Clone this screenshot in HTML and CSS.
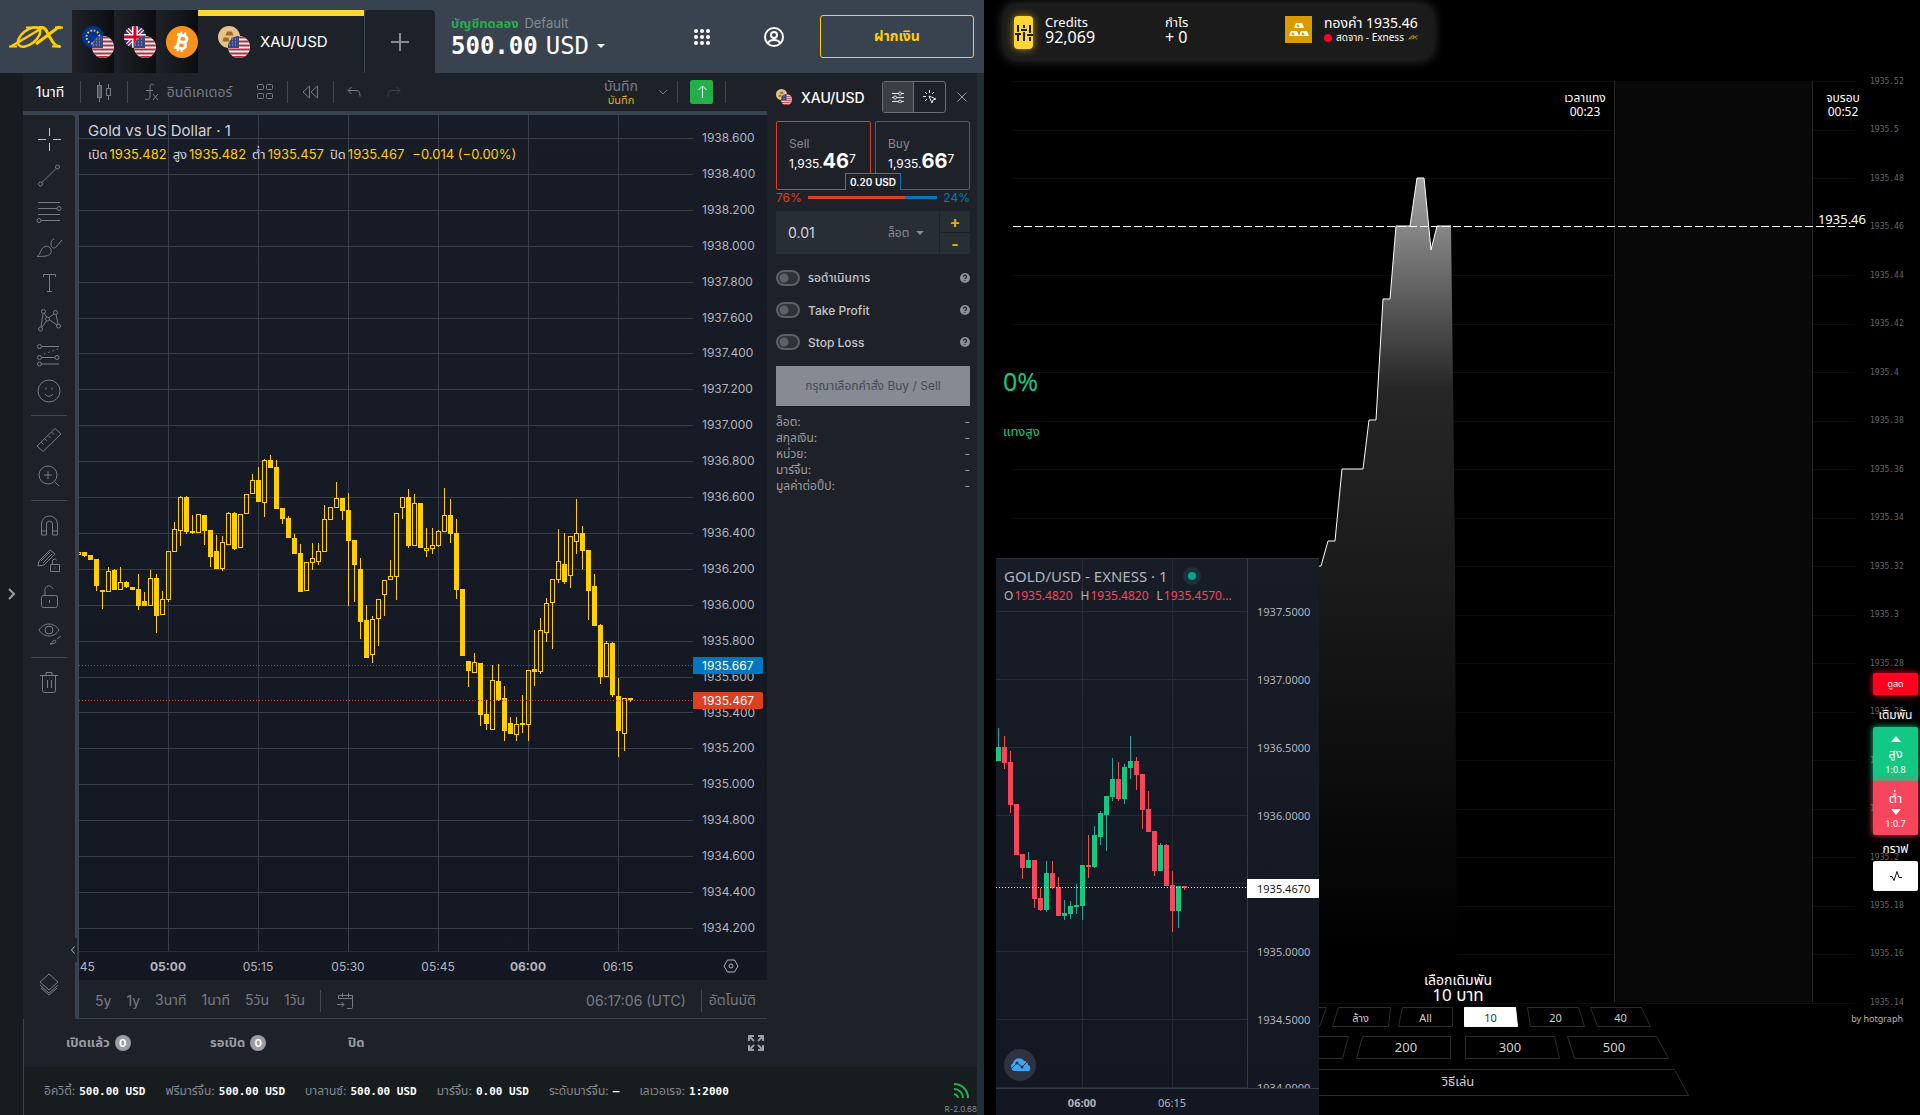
FILE: index.html
```html
<!DOCTYPE html>
<html lang="th">

<head>
    <meta charset="UTF-8">
    <meta name="viewport" content="width=device-width, initial-scale=1.0">
    <title>XAU/USD</title>
    <link rel="stylesheet" href="styles.css">
</head>

<body>
    <!-- Shared icons -->
    <svg class="sprite" width="0" height="0" aria-hidden="true">
        <clipPath id="round"><circle cx="11" cy="11" r="11" /></clipPath>
        <symbol id="us" viewBox="0 0 22 22">
            <g clip-path="url(#round)">
                <rect width="22" height="22" fill="#f4f4f4" />
                <path d="M0 1.5h22M0 5.5h22M0 9.5h22M0 13.5h22M0 17.5h22M0 21h22" stroke="#b0303c" stroke-width="2" />
                <rect width="11" height="12" fill="#39487e" />
                <path d="M1 3h9M1 6h9M1 9h9" stroke="#aab4d6" stroke-dasharray="1 2" />
            </g>
        </symbol>
        <symbol id="eu" viewBox="0 0 22 22">
            <circle cx="11" cy="11" r="11" fill="#003399" />
            <circle cx="11" cy="11" r="6.5" fill="none" stroke="#ffcc00" stroke-width="2" stroke-dasharray="1.6 1.8" />
        </symbol>
        <symbol id="gb" viewBox="0 0 22 22">
            <g clip-path="url(#round)">
                <rect width="22" height="22" fill="#1f3a8a" />
                <path d="M0 0l22 22M22 0L0 22" stroke="#fff" stroke-width="4" />
                <path d="M0 0l22 22M22 0L0 22" stroke="#d80027" stroke-width="1.5" />
                <path d="M11 0v22M0 11h22" stroke="#fff" stroke-width="6" />
                <path d="M11 0v22M0 11h22" stroke="#d80027" stroke-width="3" />
            </g>
        </symbol>
        <symbol id="gold" viewBox="0 0 22 22">
            <circle cx="11" cy="11" r="11" fill="#e3c58b" />
            <path d="M9 5.500h5l1.500 4h-8zM5.500 11.500h5l1 4h-7zM13 11.500h5l1 4h-6z" fill="#a2672b" />
        </symbol>
        <symbol id="btc" viewBox="0 0 32 32">
            <circle cx="16" cy="16" r="16" fill="#f7931a" />
            <g fill="none" stroke="#fff" stroke-width="3" transform="rotate(12 16 16)">
                <path d="M12.500 9v14M9.500 9.500H17a3 3 0 0 1 0 6.500h-4.500M17 16a3.200 3.200 0 0 1 0 6.500H9.500" />
                <path d="M13.500 6v3M17.500 6v3M13.500 23v3M17.500 23v3" stroke-width="2" />
            </g>
        </symbol>
        <symbol id="ex" viewBox="0 0 54 22">
            <g fill="none" stroke="#ffcf01" stroke-width="2.500">
                <path d="M2 20.500L34 1.500" />
                <ellipse cx="20" cy="11" rx="13" ry="7" transform="rotate(-38 20 11)" />
                <path d="M30 1.500h3c4 0 5 5 8 10s5 9 10 9M52 1.500h-3L27 18" stroke-width="3" />
                <path d="M0 20.500h8M17 1.500h17M43 20.500h9M46 1.500h8" stroke-width="2" />
            </g>
        </symbol>
        <symbol id="help" viewBox="0 0 10 10">
            <circle cx="5" cy="5" r="5" fill="#8c9096" />
            <path d="M3.500 3.800a1.500 1.500 0 1 1 2 1.300c-.4.2-.5.4-.5.9M5 7v1" fill="none" stroke="#1e2228" stroke-width="1.200" />
        </symbol>
    </svg>

    <div class="screen">
        <section class="terminal">
            <header class="topbar">
                <a class="logo" href="#" aria-label="Home"><svg width="54" height="22"><use href="#ex" /></svg></a>
                <nav class="tabs">
                    <a class="pair" href="#" aria-label="EUR/USD"><span class="coins"><svg width="22" height="22"><use href="#eu" /></svg><svg width="22" height="22"><use href="#us" /></svg></span></a>
                    <a class="pair" href="#" aria-label="GBP/USD"><span class="coins"><svg width="22" height="22"><use href="#gb" /></svg><svg width="22" height="22"><use href="#us" /></svg></span></a>
                    <a class="pair" href="#" aria-label="BTC"><svg width="32" height="32"><use href="#btc" /></svg></a>
                    <a class="pair active" href="#"><span class="coins"><svg width="22" height="22"><use href="#gold" /></svg><svg width="22" height="22"><use href="#us" /></svg></span>XAU/USD</a>
                    <button class="add-tab" aria-label="Add"><svg width="18" height="18"><path d="M9 0v18M0 9h18" stroke="#868a92" stroke-width="2" /></svg></button>
                </nav>
                <button class="account">
                    <span class="account-type"><b>บัญชีทดลอง</b> Default</span>
                    <span class="balance"><b>500.00</b><span>USD</span><i class="caret"></i></span>
                </button>
                <div class="topbar-right">
                    <button class="icon" aria-label="Apps">
                        <svg width="16" height="16" fill="#fff"><circle cx="2" cy="2" r="2" /><circle cx="8" cy="2" r="2" /><circle cx="14" cy="2" r="2" /><circle cx="2" cy="8" r="2" /><circle cx="8" cy="8" r="2" /><circle cx="14" cy="8" r="2" /><circle cx="2" cy="14" r="2" /><circle cx="8" cy="14" r="2" /><circle cx="14" cy="14" r="2" /></svg>
                    </button>
                    <button class="icon" aria-label="Profile">
                        <svg width="20" height="20" fill="none" stroke="#fff" stroke-width="2"><circle cx="10" cy="10" r="9" /><circle cx="10" cy="8" r="3" /><path d="M4 16c2-4 10-4 12 0" /></svg>
                    </button>
                    <button class="deposit">ฝากเงิน</button>
                </div>
            </header>

            <div class="workspace">
                <aside class="rail"><button aria-label="Open"><svg width="8" height="12" fill="none" stroke="#9a9da3" stroke-width="2"><path d="M1 1l5 5-5 5" /></svg></button></aside>

                <div class="desk">
                    <div class="desk-top">
                        <div class="chart-side">
                            <div class="toolbar">
                                <button class="interval">1นาที</button>
                                <i class="sep"></i>
                                <button class="style" aria-label="Candles"><svg width="16" height="20" fill="none" stroke="#787b86"><path d="M3.500 0v3M3.500 16v4M12.500 2v4M12.500 14v4" /><rect x="1.500" y="3.500" width="4" height="12" fill="#50535e" /><rect x="10.500" y="6.500" width="4" height="7" /></svg></button>
                                <i class="sep"></i>
                                <button class="indicators"><svg width="15" height="18" fill="none" stroke="#787b86"><path d="M10 2c-4-3-4 2-4 5v6c0 3-2 4-5 3M2 7.500h7M9 11l5 6M14 11l-5 6" /></svg>อินดิเคเตอร์</button>
                                <button class="layouts" aria-label="Layouts"><svg width="18" height="18" fill="none" stroke="#787b86"><rect x="1.500" y="1.500" width="6" height="5" rx="1" /><rect x="10.500" y="1.500" width="6" height="5" rx="1" /><rect x="1.500" y="10.500" width="6" height="5" rx="1" /><rect x="10.500" y="10.500" width="6" height="5" rx="1" /></svg></button>
                                <i class="sep"></i>
                                <button class="replay" aria-label="Replay"><svg width="17" height="14" fill="none" stroke="#787b86"><path d="M7.500 1v12L1 7zM15.500 1v12L9 7z" /></svg></button>
                                <i class="sep"></i>
                                <button class="undo" aria-label="Undo"><svg width="14" height="12" fill="none" stroke="#787b86"><path d="M4.500 1L1 4.500 4.500 8M1 4.500h8c3 0 4 2 4 6" /></svg></button>
                                <button class="redo" aria-label="Redo" disabled><svg width="14" height="12" fill="none" stroke="#3f434d"><path d="M9.500 1L13 4.500 9.500 8M13 4.500H5c-3 0-4 2-4 6" /></svg></button>
                                <button class="save">บันทึก<small>บันทึก</small></button>
                                <button class="save-more" aria-label="More"><svg width="10" height="6" fill="none" stroke="#787b86"><path d="M1 1l4 4 4-4" /></svg></button>
                                <i class="sep"></i>
                                <button class="publish" aria-label="Publish"><svg width="10" height="14" fill="none" stroke="#fff" stroke-width="1"><path d="M5.500 13V1M1.500 5l4-4 4 4" /></svg></button>
                                <i class="sep"></i>
                            </div>

                            <div class="chart-row">
                                <div class="tools">
                                    <button aria-label="Cross"><svg viewBox="0 0 28 28" class="on"><path d="M14.500 3v8M14.500 18v8M3 14.500h8M18 14.500h8" /></svg></button>
                                    <button aria-label="Trend line"><svg viewBox="0 0 28 28"><circle cx="5.500" cy="23" r="2" /><circle cx="22.500" cy="6" r="2" /><path d="M7 21.500L21 7.500" /></svg></button>
                                    <button aria-label="Fib"><svg viewBox="0 0 28 28"><path d="M3 5.500h22M3 11.500h19M3 17.500h22M6 23.500h19" /><circle cx="24" cy="11.500" r="2" /><circle cx="4" cy="23.500" r="2" /></svg></button>
                                    <button aria-label="Brush"><svg viewBox="0 0 28 28"><path d="M2 23.500c4-2 3-8 8-10 4-1 7 2 6 6-1 4-8 4-14 4zM16 11c0 4 3 5 5 3l6-7M16 11c0-3 1-4 3-5" /></svg></button>
                                    <button aria-label="Text"><svg viewBox="0 0 28 28"><path d="M8.500 8V5.500h12V8M14.500 5.500v17M12 22.500h5" /></svg></button>
                                    <button aria-label="Pattern"><svg viewBox="0 0 28 28"><circle cx="8.500" cy="6.500" r="2" /><circle cx="20.500" cy="7.500" r="2" /><circle cx="12.500" cy="14" r="2" /><circle cx="5.500" cy="24" r="2" /><circle cx="23.500" cy="21" r="2" /><path d="M8 8.500L6 22M9.500 8.500l2 4M7 22l4.500-6M14 12.500l5-3.500M14.500 15l7.500 5M21 9.500l2 9.500" /></svg></button>
                                    <button aria-label="Prediction"><svg viewBox="0 0 28 28"><circle cx="4.500" cy="5.500" r="2" /><circle cx="4.500" cy="16.500" r="2" /><circle cx="22" cy="16.500" r="2" /><circle cx="4.500" cy="23" r="2" /><path d="M7 5.500h17M7 16.500h13M7 23h17" /><path d="M9 13l14-5" stroke-dasharray="1.500 3" /></svg></button>
                                    <button aria-label="Emoji"><svg viewBox="0 0 28 28"><circle cx="14" cy="14" r="11" /><path d="M10 17c2 3 6 3 8 0M11 10.500v2M17 10.500v2" /></svg></button>
                                    <i></i>
                                    <button aria-label="Measure"><svg viewBox="0 0 28 28"><path d="M2 20L20 2.500l6 5.500L8 25.500zM6 16l2.500 2.500M9.500 12.500L12 15M13 9.500l2.500 2.500M16.500 6l2.500 2.500" /></svg></button>
                                    <button aria-label="Zoom"><svg viewBox="0 0 28 28"><circle cx="13" cy="13" r="9" /><path d="M13 9v8M9 13h8M20 20l4 4" /></svg></button>
                                    <i></i>
                                    <button aria-label="Magnet"><svg viewBox="0 0 28 28"><path d="M6.500 24V13a8 8 0 0 1 16 0v11h-5V13a3 3 0 0 0-6 0v11zM6.500 20h5M17.500 20h5" /></svg></button>
                                    <button aria-label="Drawing mode"><svg viewBox="0 0 28 28"><path d="M3 19l1-5L15 3l5 4L9 18zM6 14l9-9M8 16l9-9" /><path d="M15.500 17.500h9v7h-9zM17.500 17v-2.500a2 2 0 0 1 4-1M20 20.500v1" /></svg></button>
                                    <button aria-label="Lock"><svg viewBox="0 0 28 28"><rect x="6.500" y="12.500" width="16" height="12" rx="2" /><path d="M10 12V8a4 4 0 0 1 8-2M14.500 17v3" /></svg></button>
                                    <button aria-label="Hide"><svg viewBox="0 0 28 28"><path d="M4 11c5-8 15-8 20 0-5 8-15 8-20 0zM15 25c3 0 2-4 5-4 2 2 0 4-5 4zM22 20l4-3" /><circle cx="14" cy="11" r="4" /></svg></button>
                                    <i></i>
                                    <button aria-label="Remove"><svg viewBox="0 0 28 28"><path d="M5 7.500h18M11 7V4.500h6V7M7.500 7.500v15a2 2 0 0 0 2 2h9a2 2 0 0 0 2-2v-15M12.500 12v8M16.500 12v8" /></svg></button>
                                    <button class="layers" aria-label="Layers"><svg viewBox="0 0 28 28"><path d="M14 3l9 8-9 8-9-8zM5 14l9 8 9-8M6 17l8 7 8-7" /></svg></button>
                                    <span class="collapse"><svg width="4" height="8" fill="none" stroke="#b2b5be"><path d="M3.500 0.500l-3 3.500 3 3.500" /></svg></span>
                                </div>

                                <div class="chart-main">
                                    <div class="plot-row">
                                        <svg class="plot" id="mainPlot"></svg>
                                        <div class="prices" id="mainPrices"></div>
                                        <div class="legend">
                                            <h1>Gold vs US Dollar · 1</h1>
                                            <p><span>เปิด<b>1935.482</b></span><span>สูง<b>1935.482</b></span><span>ต่ำ<b>1935.457</b></span><span>ปิด<b>1935.467</b></span><b>−0.014 (−0.00%)</b></p>
                                        </div>
                                        <span class="price-tag ask">1935.667</span>
                                        <span class="price-tag bid">1935.467</span>
                                    </div>
                                    <div class="time-row">
                                        <div class="times"><span>04:45</span><b>05:00</b><span>05:15</span><span>05:30</span><span>05:45</span><b>06:00</b><span>06:15</span></div>
                                        <button aria-label="Settings"><svg width="16" height="16" fill="none" stroke="#b2b5be"><path d="M4.500 2h7L15 8l-3.500 6h-7L1 8z" /><circle cx="8" cy="8" r="2" /></svg></button>
                                    </div>
                                    <div class="range">
                                        <button>5y</button><button>1y</button><button>3นาที</button><button>1นาที</button><button>5วัน</button><button>1วัน</button>
                                        <i class="sep"></i>
                                        <button aria-label="Go to"><svg width="18" height="18" fill="none" stroke="#787b86"><path d="M2.500 7V3.500h14v12a1 1 0 0 1-1 1H11M2.500 6.500h14M6.500 1v4M12.500 1v4M1 12.500h7M5.500 10L8 12.500 5.500 15" /></svg></button>
                                        <span class="clock">06:17:06 (UTC)</span>
                                        <i class="sep"></i>
                                        <button>อัตโนมัติ</button>
                                    </div>
                                </div>
                            </div>

                            <div class="orders">
                                <a href="#">เปิดแล้ว<span>0</span></a>
                                <a href="#">รอเปิด<span>0</span></a>
                                <a href="#">ปิด</a>
                                <button aria-label="Expand"><svg width="16" height="16" fill="none" stroke="#9a9da3" stroke-width="2"><path d="M1 6V1h5M10 1h5v5M15 10v5h-5M6 15H1v-5M1 1l5 5M15 1l-5 5M15 15l-5-5M1 15l5-5" /></svg></button>
                            </div>
                        </div>

                        <aside class="ticket">
                            <div class="ticket-head">
                                <span class="coins small"><svg width="11" height="11"><use href="#gold" /></svg><svg width="11" height="11"><use href="#us" /></svg></span>
                                <h2>XAU/USD</h2>
                                <div class="mode">
                                    <button class="on" aria-label="Form"><svg width="12" height="12" fill="none" stroke="#e6e7e9"><path d="M0 2.500h12M0 6.500h12M0 10.500h12" /><circle cx="8" cy="2.500" r="1.500" fill="#3a3f44" /><circle cx="3" cy="6.500" r="1.500" fill="#3a3f44" /><circle cx="8" cy="10.500" r="1.500" fill="#3a3f44" /></svg></button>
                                    <button aria-label="One click"><svg width="14" height="14" fill="none" stroke="#e6e7e9"><path d="M6.500 0v3M0 6.500h3M2 2l2 2M11 2L9 4M2 11l2-2M6 6l7 3-3 1-1 3z" /></svg></button>
                                </div>
                                <button class="close" aria-label="Close"><svg width="10" height="10" stroke="#9a9da3"><path d="M0.500 0.500l9 9M9.500 0.500l-9 9" /></svg></button>
                            </div>
                            <div class="quotes">
                                <button class="sell">Sell<span>1,935.<b>46</b><sup>7</sup></span></button>
                                <button class="buy">Buy<span>1,935.<b>66</b><sup>7</sup></span></button>
                                <span class="spread">0.20 USD</span>
                            </div>
                            <div class="sentiment"><span>76%</span><i></i><span>24%</span></div>
                            <div class="volume">
                                <input type="text" value="0.01" aria-label="Volume">
                                <select aria-label="Unit"><option>ล็อต</option></select>
                                <button class="plus" aria-label="Increase">+</button>
                                <button class="minus" aria-label="Decrease">-</button>
                            </div>
                            <label class="switch"><input type="checkbox">รอดำเนินการ<svg width="10" height="10"><use href="#help" /></svg></label>
                            <label class="switch"><input type="checkbox">Take Profit<svg width="10" height="10"><use href="#help" /></svg></label>
                            <label class="switch"><input type="checkbox">Stop Loss<svg width="10" height="10"><use href="#help" /></svg></label>
                            <button class="submit" disabled>กรุณาเลือกคำสั่ง Buy / Sell</button>
                            <dl>
                                <div><dt>ล็อต:</dt><dd>-</dd></div>
                                <div><dt>สกุลเงิน:</dt><dd>-</dd></div>
                                <div><dt>หน่วย:</dt><dd>-</dd></div>
                                <div><dt>มาร์จิ้น:</dt><dd>-</dd></div>
                                <div><dt>มูลค่าต่อปิ๊ป:</dt><dd>-</dd></div>
                            </dl>
                        </aside>
                    </div>

                    <footer class="status">
                        <span>อิควิตี้:<b>500.00 USD</b></span>
                        <span>ฟรีมาร์จิ้น:<b>500.00 USD</b></span>
                        <span>บาลานซ์:<b>500.00 USD</b></span>
                        <span>มาร์จิ้น:<b>0.00 USD</b></span>
                        <span>ระดับมาร์จิ้น:<b>–</b></span>
                        <span>เลเวอเรจ:<b>1:2000</b></span>
                        <div class="signal">
                            <svg width="16" height="16" fill="none" stroke="#23b04b" stroke-width="2"><path d="M1 1c8 0 14 6 14 14M1 6c5 0 9 4 9 9M1 11c2 0 4 2 4 4" /></svg>
                            <small>R-2.0.68</small>
                        </div>
                    </footer>
                </div>
                <div class="edge"></div>
            </div>
        </section>

        <section class="game">
            <header class="credits">
                <button class="tune" aria-label="Settings"><svg width="18" height="16" fill="none" stroke="#1b1b1b" stroke-width="2"><path d="M3 0v7M3 10v6M9 0v3M9 7v9M15 0v8M15 12v4M0 9h6M6 5h6M12 10h6" /></svg></button>
                <p class="amount">Credits<b>92,069</b></p>
                <p class="profit">กำไร<b>+ 0</b></p>
                <span class="bars"><svg width="20" height="14" fill="#fff"><path d="M7 0h6l2 5H5zM2 8h6l2 5H0zM12 8h6l2 5H10z" /><path d="M8 2l2 2M3 10l2 2M13 10l2 2" stroke="#d89b00" stroke-width="2" /></svg></span>
                <p class="asset">ทองคำ 1935.46<small><i></i>สดจาก - Exness <svg width="10" height="5" viewBox="0 0 54 22"><use href="#ex" /></svg></small></p>
            </header>

            <div class="round">
                <svg class="round-plot" id="roundPlot">
                    <defs>
                        <linearGradient id="fade" gradientUnits="userSpaceOnUse" x1="0" y1="102" x2="0" y2="880">
                            <stop offset="0" stop-color="#a4a4a4" />
                            <stop offset="0.06" stop-color="#888" />
                            <stop offset="0.27" stop-color="#262626" />
                            <stop offset="0.5" stop-color="#1b1b1b" />
                            <stop offset="1" stop-color="#000" />
                        </linearGradient>
                    </defs>
                    <g id="roundGrid"></g>
                    <rect x="630" y="5" width="199" height="921" fill="#080808" />
                    <path d="M630.500 5v921M828.500 5v921" stroke="#262626" />
                    <path d="M300 490h37l7-25h7l7-72h21l6-49h7l7-121h7l6-73h14l7-48h7l7 72 6-24h14l2 154 2 186 2 435H300z" fill="url(#fade)" />
                    <path d="M300 490h37l7-25h7l7-72h21l6-49h7l7-121h7l6-73h14l7-48h7l7 72 6-24h14" fill="none" stroke="#fff" />
                    <path d="M29 150.500h842" stroke="#fff" stroke-dasharray="8 3" />
                </svg>
                <div class="round-prices" id="roundPrices"></div>
                <p class="mark bet-time">เวลาแทง<b>00:23</b></p>
                <p class="mark end-time">จบรอบ<b>00:52</b></p>
                <span class="mark last">1935.46</span>
                <p class="share">0%<small>แทงสูง</small></p>
            </div>
            <p class="by">by hotgraph</p>

            <div class="stake">
                <p>เลือกเดิมพัน<b>10 บาท</b></p>
                <div class="pad">
                    <!-- Slanted key outlines -->
                    <svg width="462" height="90" fill="none" stroke="#2c2c2c" stroke-linejoin="round">
                        <path d="M48.500 0.500h51l-7 19h-53zM111.500 0.500h52l-2 19h-56zM175.500 0.500h50v19h-54zM300.500 0.500h51l6 19h-54zM363.500 0.500h51l9 19h-53z" />
                        <path d="M237.500 0.500h51l2 19h-53z" fill="#fff" stroke="#fff" />
                        <path d="M27.500 29.500h94l-6 22h-98zM135.500 29.500h88v22h-94zM238.500 29.500h89l5 22h-94zM340.500 29.500h89l12 22h-94zM14.500 62.500h433l14 26H0.500z" />
                    </svg>
                    <div class="keys"><span></span><button>ล้าง</button><button>All</button><button class="on">10</button><button>20</button><button>40</button></div>
                    <div class="keys"><span></span><button>200</button><button>300</button><button>500</button></div>
                    <div class="keys"><button>วิธีเล่น</button></div>
                </div>
            </div>

            <div class="side">
                <button class="live">ดูสด</button>
                <span>เดิมพัน</span>
                <button class="up"><svg width="10" height="6" fill="#fff"><path d="M0 6l5-6 5 6z" /></svg>สูง<small>1:0.8</small></button>
                <button class="down">ต่ำ<svg width="10" height="6" fill="#fff"><path d="M0 0l5 6 5-6z" /></svg><small>1:0.7</small></button>
                <span>กราฟ</span>
                <button class="graph" aria-label="Graph"><svg width="12" height="12" fill="none" stroke="#111" stroke-width="1"><path d="M0 6.500h2l2 4 3-9 2 6h3" /></svg></button>
            </div>

            <div class="widget">
                <div class="widget-plot">
                    <svg class="plot" id="widgetPlot"></svg>
                    <div class="widget-prices" id="widgetPrices"></div>
                    <div class="widget-legend">
                        <h3>GOLD/USD - EXNESS · 1<i></i></h3>
                        <p>O<b>1935.4820</b>H<b>1935.4820</b>L<b>1935.4570...</b></p>
                    </div>
                    <span class="widget-tag">1935.4670</span>
                    <a class="cloud" href="#" aria-label="TradingView"><svg width="22" height="14"><path d="M5 13a4.500 4.500 0 0 1-1-8C6-1 13-1 15 3c3 0 4 2 4 4 3 1 3 6 0 6z" fill="#3ba4f4" /><path d="M2 11l6-6 5 4 5-5" fill="none" stroke="#2f3241" stroke-width="1" /><circle cx="8" cy="5" r="1.500" fill="#2f3241" /><circle cx="13" cy="9" r="1.500" fill="#2f3241" /></svg></a>
                </div>
                <div class="widget-times"><b>06:00</b><span>06:15</span></div>
            </div>
        </section>
    </div>

    <script src="script.js"></script>
</body>

</html>
```
FILE: styles.css
```css
* {
    box-sizing: border-box;
}

body {
    margin: 0;
    background: #000;
    color: #d1d4dc;
    font-family: Inter, "Noto Sans", "Noto Sans Thai", sans-serif;
    font-size: 13px;
}

button,
input,
select {
    margin: 0;
    padding: 0;
    border: 0;
    background: none;
    color: inherit;
    font: inherit;
}

button {
    cursor: pointer;
}

a {
    color: inherit;
    text-decoration: none;
}

p,
h1,
h2,
h3,
dl,
dd {
    margin: 0;
}

svg {
    display: block;
    flex: none;
}

.sprite {
    position: absolute;
}

.screen {
    display: grid;
    grid-template-columns: minmax(0, 984fr) minmax(0, 936fr);
    height: 100vh;
}

/* Terminal */
.terminal {
    display: flex;
    flex-direction: column;
    min-height: 0;
    background: #1e2228;
}

.topbar {
    display: flex;
    height: 73px;
    padding-right: 10px;
    background: #38434f;
}

.logo {
    width: 72px;
    padding: 26px 0 0 9px;
}

.tabs {
    display: flex;
    padding-top: 10px;
}

.pair {
    display: flex;
    align-items: center;
    width: 42px;
    padding: 0 0 0 10px;
    overflow: hidden;
    background: linear-gradient(90deg, #1e2228, #0b0d10);
    color: #fff;
    font-size: 15px;
}

.pair.active {
    width: 166px;
    gap: 10px;
    padding: 0 0 6px 20px;
    background: #1e2228;
    border-top: 6px solid #fdd835;
}

.coins {
    position: relative;
    display: block;
    flex: none;
    width: 32px;
    height: 32px;
}

.coins svg + svg {
    position: absolute;
    right: 0;
    bottom: 0;
}

.coins.small {
    width: 16px;
    height: 16px;
}

.add-tab {
    display: grid;
    place-items: center;
    width: 70px;
    margin-left: 1px;
    border-radius: 4px 4px 0 0;
    background: #1e2228;
}

.account {
    display: flex;
    flex-direction: column;
    padding: 14px 0 0 16px;
    color: #868a92;
    text-align: left;
}

.account-type {
    line-height: 18px;
    white-space: nowrap;
}

.account-type b {
    margin-right: 2px;
    color: #23b04b;
}

.balance {
    display: flex;
    align-items: center;
    gap: 8px;
    color: #fff;
    font-family: "DejaVu Sans Mono", monospace;
    font-size: 24px;
    line-height: 28px;
}

.caret {
    border: 4px solid transparent;
    border-top-color: #fff;
    border-bottom: 0;
}

.topbar-right {
    display: flex;
    align-items: flex-start;
    gap: 54px;
    margin-left: auto;
    padding-top: 15px;
}

.icon {
    display: grid;
    place-items: center;
    height: 44px;
}

.deposit {
    width: 154px;
    height: 43px;
    margin-left: -18px;
    border: 1px solid #ffcf01;
    border-radius: 3px;
    color: #ffcf01;
    font-size: 14px;
    font-weight: bold;
}

.workspace {
    display: flex;
    flex: 1;
    min-height: 0;
}

.rail {
    display: grid;
    place-items: center;
    width: 23px;
    background: #171c1f;
}

.edge {
    width: 7px;
    background: #222e36;
}

.desk {
    display: flex;
    flex: 1;
    flex-direction: column;
    min-width: 0;
}

.desk-top {
    display: flex;
    flex: 1;
    min-height: 0;
}

.chart-side {
    display: flex;
    flex: 1;
    flex-direction: column;
    min-width: 0;
}

.toolbar {
    display: flex;
    align-items: center;
    height: 42px;
    padding-right: 41px;
    border-bottom: 4px solid #38434f;
    color: #787b86;
    font-size: 14px;
}

.sep {
    width: 1px;
    height: 22px;
    background: #434751;
}

.toolbar button {
    display: flex;
    align-items: center;
    justify-content: center;
}

.toolbar .interval {
    width: 57px;
    padding-right: 3px;
    color: #fff;
}

.toolbar .style {
    width: 46px;
}

.toolbar .indicators {
    width: 120px;
    gap: 8px;
    white-space: nowrap;
}

.toolbar .layouts {
    width: 39px;
    justify-content: flex-start;
    padding-left: 8px;
}

.toolbar .replay {
    width: 45px;
}

.toolbar .undo,
.toolbar .redo {
    width: 40px;
}

.toolbar .save {
    flex-direction: column;
    margin-left: auto;
    line-height: 17px;
}

.save small {
    color: #d9b310;
    font-size: 11px;
    line-height: 13px;
}

.toolbar .save-more {
    width: 39px;
    padding-left: 10px;
}

.toolbar .publish {
    width: 23px;
    height: 24px;
    margin: 0 12px;
    border-radius: 2px;
    background: #23b04b;
}

.chart-row {
    display: flex;
    flex: 1;
    min-height: 0;
    background: #38434f;
}

.tools {
    position: relative;
    display: flex;
    flex-direction: column;
    align-items: center;
    width: 52px;
    margin-right: 4px;
    padding: 6px 0 16px;
    border-radius: 0 4px 0 0;
    background: #1e2228;
}

.tools button {
    display: grid;
    place-items: center;
    width: 36px;
    height: 36px;
}

.tools button svg {
    width: 28px;
    height: 28px;
    fill: none;
    stroke: #787b86;
}

.tools button svg.on {
    stroke: #ffcf01;
}

.tools > i {
    width: 36px;
    height: 1px;
    margin: 6px 0;
    background: #434751;
}

.tools .layers {
    margin-top: auto;
}

.collapse {
    position: absolute;
    right: -2px;
    bottom: 56px;
    padding: 9px 2px;
    border-radius: 3px;
    background: #1e2228;
}

.chart-main {
    display: flex;
    flex: 1;
    flex-direction: column;
    min-width: 0;
    background: linear-gradient(#181c27, #131722);
}

.plot-row {
    position: relative;
    display: flex;
    flex: 1;
    min-height: 0;
    border-bottom: 1px solid #2a2e39;
}

.plot {
    flex: 1;
    width: 0;
    height: 100%;
}

.prices {
    display: grid;
    grid-auto-rows: 1fr;
    align-items: center;
    width: 74px;
    padding: 5px 0 5px 9px;
    color: #b2b5be;
    font-size: 12px;
    line-height: 14px;
}

.legend {
    position: absolute;
    top: 6px;
    left: 9px;
}

.legend h1 {
    color: #d1d4dc;
    font-size: 15px;
    font-weight: normal;
    line-height: 20px;
}

.legend p {
    display: flex;
    gap: 6px;
    margin-top: 4px;
    line-height: 18px;
}

.legend b {
    padding-left: 2px;
    color: #ffcf01;
    font-weight: normal;
}

.price-tag {
    position: absolute;
    right: 4px;
    width: 70px;
    padding-left: 9px;
    border-radius: 0 2px 2px 0;
    color: #fff;
    font-size: 12px;
    line-height: 17px;
}

.ask {
    top: 542px;
    background: #0277bd;
}

.bid {
    top: 577px;
    background: #db4022;
}

.time-row {
    display: flex;
    align-items: center;
    justify-content: space-between;
    height: 28px;
    padding-right: 28px;
    color: #b2b5be;
    font-size: 12px;
}

.times {
    display: flex;
    overflow: hidden;
}

.times > * {
    width: 90px;
    text-align: center;
}

.times > :first-child {
    margin-left: -46px;
}

.range {
    display: flex;
    align-items: center;
    gap: 15px;
    height: 39px;
    padding: 3px 11px 0 16px;
    border-bottom: 1px solid #38434f;
    background: #1e2228;
    color: #787b86;
    font-size: 14px;
    white-space: nowrap;
}

.clock {
    margin-left: auto;
}

.range .sep:last-of-type {
    margin-right: -8px;
}

.orders {
    display: flex;
    align-items: center;
    height: 48px;
    padding: 0 3px 0 42px;
    border-left: 1px solid #38434f;
    color: #9a9da3;
    font-weight: bold;
}

.orders a {
    display: flex;
    align-items: center;
    gap: 5px;
    width: 144px;
}

.orders a + a {
    width: 138px;
}

.orders a span {
    width: 16px;
    border-radius: 8px;
    background: #9a9da3;
    color: #fff;
    font-size: 11px;
    line-height: 16px;
    text-align: center;
}

.orders button {
    margin-left: auto;
}

/* Order ticket */
.ticket {
    display: flex;
    flex-direction: column;
    width: 210px;
    padding: 8px 7px 0 9px;
}

.ticket-head {
    display: flex;
    align-items: center;
    height: 32px;
}

.ticket h2 {
    margin-left: 9px;
    color: #fff;
    font-size: 14px;
    font-weight: 500;
}

.mode {
    display: flex;
    height: 32px;
    margin-left: auto;
    border: 1px solid #6b6f74;
    border-radius: 3px;
}

.mode button {
    display: grid;
    place-items: center;
    width: 31px;
}

.mode .on {
    border-right: 1px solid #6b6f74;
    background: #3a3f44;
}

.close {
    margin: 0 3px 0 11px;
}

.quotes {
    position: relative;
    display: grid;
    grid-template-columns: 1fr 1fr;
    gap: 4px;
    height: 69px;
    margin-top: 8px;
}

.quotes button {
    padding-left: 12px;
    border: 1px solid #db4022;
    border-radius: 2px;
    color: #868a92;
    font-size: 12px;
    line-height: 14px;
    text-align: left;
}

.quotes .buy {
    border-color: #0277bd;
}

.quotes button span {
    display: block;
    color: #fff;
    line-height: 20px;
    white-space: nowrap;
}

.quotes button b {
    font-size: 20px;
}

.quotes sup {
    font-size: 12px;
    line-height: 0;
}

.spread {
    position: absolute;
    bottom: 0;
    left: 50%;
    width: 56px;
    margin-left: -28px;
    border: 1px solid #db4022;
    border-right-color: #0277bd;
    border-bottom: 0;
    background: #1e2228;
    color: #fff;
    font-size: 10px;
    font-weight: 600;
    line-height: 16px;
    text-align: center;
}

.sentiment {
    display: flex;
    align-items: center;
    gap: 6px;
    color: #db4022;
    font-size: 12px;
    line-height: 15px;
}

.sentiment i {
    flex: 1;
    height: 3px;
    background: linear-gradient(90deg, #db4022 75%, #0277bd 75%);
}

.sentiment span:last-child {
    color: #0277bd;
}

.volume {
    position: relative;
    display: grid;
    grid-template-columns: 1fr 58px 30px;
    grid-template-rows: 21px 21px;
    row-gap: 1px;
    margin-top: 6px;
}

.volume input,
.volume select {
    grid-row: span 2;
    min-width: 0;
    background: #272f35;
}

.volume input {
    padding-left: 12px;
    color: #d1d4dc;
    font-size: 14px;
}

.volume select {
    margin-right: 1px;
    padding-left: 6px;
    appearance: none;
    color: #868a92;
    font-size: 12px;
}

.volume::after {
    content: "";
    position: absolute;
    top: 20px;
    right: 46px;
    border: 4px solid transparent;
    border-top-color: #868a92;
    border-bottom: 0;
}

.volume button {
    background: #272f35;
    color: #d9b310;
    font-size: 16px;
    font-weight: bold;
    line-height: 20px;
}

.volume .minus {
    grid-column: 3;
}

.switch {
    display: flex;
    align-items: center;
    gap: 8px;
    height: 32px;
    color: #c4c6ca;
    font-size: 12px;
    font-weight: 500;
}

.volume + .switch {
    margin-top: 8px;
}

.switch input {
    width: 24px;
    height: 16px;
    border: 2px solid #5d6166;
    border-radius: 8px;
    background: radial-gradient(circle at 6px 6px, #5d6166 4px, #2f3337 5px);
    appearance: none;
}

.switch svg {
    margin-left: auto;
}

.submit {
    height: 40px;
    margin-top: 8px;
    background: #868a92;
    color: #434b58;
    font-size: 12px;
}

.ticket dl {
    margin-top: 8px;
    color: #9a9da3;
    font-size: 12px;
}

.ticket dl div {
    display: flex;
    justify-content: space-between;
    height: 16px;
    line-height: 16px;
}

/* Account status */
.status {
    display: flex;
    align-items: center;
    gap: 20px;
    height: 48px;
    padding-left: 20px;
    border-left: 1px solid #38434f;
    background: #171c1f;
    color: #868a92;
    font-size: 12px;
    white-space: nowrap;
}

.status b {
    margin-left: 4px;
    color: #fff;
    font-family: "DejaVu Sans Mono", monospace;
    font-size: 11px;
}

.signal {
    display: flex;
    flex-direction: column;
    align-items: center;
    gap: 5px;
    margin-left: auto;
    padding-top: 14px;
}

.signal small {
    font-size: 8px;
    line-height: 10px;
}

/* Game */
.game {
    position: relative;
    display: flex;
    flex-direction: column;
    min-width: 0;
    color: #fff;
    font-family: "Noto Sans", "Noto Sans Thai", sans-serif;
}

.credits {
    display: flex;
    width: 431px;
    height: 56px;
    margin: 4px 0 16px 19px;
    padding: 12px 11px 0;
    border-radius: 14px;
    background: #1b1b1b;
    box-shadow: 0 0 8px 2px #262626;
}

.credits b {
    display: block;
    font-size: 16px;
    font-weight: normal;
    line-height: 16px;
}

.credits p {
    line-height: 13px;
}

.tune {
    display: grid;
    place-items: center;
    width: 19px;
    height: 33px;
    border-radius: 4px;
    background: #fdd835;
    box-shadow: 0 0 8px #b39218;
}

.amount {
    width: 120px;
    margin-left: 12px;
}

.profit {
    width: 120px;
}

.bars {
    display: grid;
    place-items: center;
    width: 27px;
    height: 27px;
    background: #d89b00;
}

.credits .asset {
    margin-left: 12px;
    font-size: 14px;
    white-space: nowrap;
}

.asset small {
    display: flex;
    align-items: center;
    gap: 4px;
    margin-top: 2px;
    font-size: 10px;
}

.asset i {
    width: 8px;
    height: 8px;
    border-radius: 50%;
    background: #ff0020;
}

.round {
    position: relative;
    display: flex;
    flex: 1;
    max-height: 933px;
}

.round-plot {
    flex: 1;
    width: 0;
    height: 100%;
}

.round-prices {
    display: flex;
    flex-direction: column;
    justify-content: space-between;
    width: 50px;
    color: #666;
    font-family: "DejaVu Sans Mono", monospace;
    font-size: 8px;
    line-height: 12px;
}

.mark {
    position: absolute;
    font-size: 12px;
    line-height: 14px;
    text-align: center;
}

.mark b {
    display: block;
    font-weight: normal;
}

.bet-time {
    top: 15px;
    right: 311px;
    width: 48px;
}

.end-time {
    top: 15px;
    right: 53px;
    width: 48px;
}

.last {
    top: 136px;
    right: 54px;
    font-size: 13px;
}

.share {
    position: absolute;
    top: 288px;
    left: 19px;
    color: #13c784;
    font-size: 25px;
    line-height: 34px;
}

.share small {
    display: block;
    margin-top: 24px;
    font-size: 13px;
    line-height: 18px;
}

.by {
    padding-right: 17px;
    color: #b5b5b5;
    font-size: 9px;
    line-height: 20px;
    text-align: right;
}

.stake {
    position: absolute;
    bottom: 18px;
    left: 243px;
    width: 462px;
    font-size: 14px;
    line-height: 15px;
    text-align: center;
}

.stake p {
    margin-bottom: 4px;
}

.stake b {
    display: block;
    font-size: 17px;
    font-weight: normal;
    line-height: 16px;
}

.pad {
    position: relative;
    display: grid;
    grid-template-rows: 20px 23px 27px;
    gap: 9px;
    height: 90px;
    color: #d0d0d0;
}

.pad > svg {
    position: absolute;
    top: 0;
    left: 0;
}

.keys {
    position: relative;
    display: flex;
    justify-content: center;
    gap: 12px;
}

.keys > * {
    width: 53px;
    font-size: 11px;
}

.keys:nth-child(3) > * {
    width: 92px;
    font-size: 13px;
}

.keys:nth-child(4) > * {
    width: 430px;
    font-size: 13px;
}

.keys .on {
    color: #333;
}

.side {
    position: absolute;
    top: 673px;
    right: 2px;
    display: flex;
    flex-direction: column;
    width: 45px;
}

.side span {
    padding-top: 8px;
    font-size: 12px;
    line-height: 24px;
    text-align: center;
}

.side button {
    display: flex;
    flex-direction: column;
    align-items: center;
    justify-content: center;
    gap: 3px;
    height: 54px;
    font-size: 13px;
    line-height: 16px;
}

.side small {
    font-size: 9px;
    line-height: 12px;
}

.side .live {
    height: 22px;
    border-radius: 2px;
    background: #ff0020;
    box-shadow: 0 0 6px #ff0020;
    font-size: 9px;
}

.side .up {
    padding-top: 4px;
    border-radius: 2px 2px 0 0;
    background: #13c784;
    box-shadow: 0 0 6px #13c784;
}

.side .down {
    padding-top: 4px;
    border-radius: 0 0 2px 2px;
    background: #f6465d;
    box-shadow: 0 0 6px #f6465d;
}

.side span:nth-of-type(2) {
    padding-top: 2px;
}

.side .graph {
    height: 30px;
    border-radius: 2px;
    background: #fff;
}

/* Floating chart */
.widget {
    position: absolute;
    bottom: 0;
    left: 12px;
    display: flex;
    flex-direction: column;
    width: 323px;
    height: 557px;
    border-top: 1px solid #2f323c;
    background: linear-gradient(#181c27, #131722);
    color: #b2b5be;
    font-family: "Noto Sans", sans-serif;
    font-size: 11px;
}

.widget-plot {
    position: relative;
    display: flex;
    height: 531px;
    overflow: hidden;
    border-bottom: 1px solid #363a45;
}

.widget-prices {
    display: grid;
    grid-auto-rows: 68px;
    align-items: center;
    width: 72px;
    padding: 18px 0 0 9px;
    border-left: 1px solid #363a45;
}

.widget-legend {
    position: absolute;
    top: 7px;
    left: 8px;
}

.widget-legend h3 {
    display: flex;
    align-items: center;
    gap: 15px;
    font-size: 15px;
    font-weight: normal;
    line-height: 20px;
}

.widget-legend i {
    width: 18px;
    height: 18px;
    border: 5px solid #1a3238;
    border-radius: 50%;
    background: #0f9f8f;
}

.widget-legend p {
    font-size: 12px;
    line-height: 20px;
}

.widget-legend b {
    margin: 0 8px 0 1px;
    color: #f6465d;
    font-weight: normal;
}

.widget-tag {
    position: absolute;
    top: 320px;
    right: 0;
    width: 72px;
    padding-left: 10px;
    background: #fff;
    color: #131722;
    line-height: 19px;
}

.cloud {
    position: absolute;
    bottom: 7px;
    left: 8px;
    display: grid;
    place-items: center;
    width: 32px;
    height: 32px;
    border-radius: 50%;
    background: #2f3241;
}

.widget-times {
    display: flex;
    padding: 2px 0 0 41px;
    line-height: 24px;
    text-align: center;
}

.widget-times > * {
    width: 90px;
}
```
FILE: script.js
```javascript
const SVG_NS = 'http://www.w3.org/2000/svg';

// Candles: [type, high, body top, body bottom, low], in chart points from the top
const mainCandles = [
    ['h', 333, 336, 345, 345], ['f', 336, 336, 348, 351], ['f', 345, 345, 360, 360], ['f', 357, 357, 438, 453],
    ['f', 450, 450, 456, 507], ['h', 381, 393, 456, 456], ['f', 387, 390, 450, 450], ['h', 381, 426, 450, 450],
    ['f', 423, 426, 441, 444], ['f', 441, 441, 450, 450], ['f', 402, 447, 498, 510], ['f', 456, 483, 498, 498],
    ['h', 390, 414, 498, 498], ['f', 402, 414, 528, 579], ['h', 453, 477, 525, 525], ['h', 333, 333, 480, 486],
    ['h', 246, 267, 336, 336], ['h', 168, 171, 273, 318], ['f', 168, 171, 276, 282], ['f', 225, 273, 279, 282],
    ['h', 222, 222, 279, 279], ['f', 225, 225, 273, 315], ['f', 270, 270, 351, 381], ['f', 285, 333, 387, 387],
    ['h', 288, 306, 387, 393], ['h', 216, 219, 315, 315], ['f', 216, 219, 327, 330], ['h', 222, 222, 324, 324],
    ['h', 162, 162, 222, 222], ['h', 102, 120, 162, 162], ['f', 81, 120, 186, 186], ['h', 57, 60, 189, 231],
    ['f', 45, 60, 84, 84], ['f', 60, 81, 207, 207], ['f', 204, 204, 237, 252], ['f', 228, 234, 294, 294],
    ['f', 282, 294, 342, 342], ['f', 312, 339, 456, 456], ['h', 366, 366, 453, 453], ['h', 309, 354, 369, 390],
    ['h', 309, 333, 366, 375], ['h', 195, 237, 336, 336], ['h', 201, 201, 240, 240], ['h', 126, 174, 204, 204],
    ['f', 174, 174, 213, 240], ['f', 159, 210, 303, 498], ['f', 300, 300, 375, 486], ['f', 354, 387, 546, 597],
    ['f', 495, 540, 654, 654], ['h', 528, 537, 645, 670], ['h', 477, 477, 537, 618], ['h', 420, 420, 465, 528],
    ['h', 360, 408, 420, 420], ['h', 219, 219, 411, 480], ['h', 171, 171, 204, 237], ['f', 147, 171, 318, 324],
    ['h', 162, 189, 318, 318], ['f', 189, 189, 324, 324], ['h', 264, 324, 333, 351], ['h', 264, 315, 327, 342],
    ['h', 270, 273, 318, 321], ['h', 144, 225, 276, 276], ['f', 177, 225, 282, 309], ['f', 237, 279, 450, 477],
    ['f', 447, 447, 648, 648], ['f', 663, 663, 693, 741], ['h', 639, 666, 699, 699], ['f', 669, 669, 825, 858],
    ['f', 780, 822, 852, 870], ['h', 675, 720, 870, 870], ['f', 672, 723, 780, 783], ['f', 738, 774, 873, 903],
    ['f', 831, 849, 882, 882], ['h', 831, 852, 885, 903], ['f', 765, 849, 855, 879], ['h', 690, 690, 855, 903],
    ['f', 570, 687, 696, 738], ['h', 534, 570, 696, 702], ['h', 474, 489, 579, 606], ['h', 417, 417, 489, 627],
    ['h', 267, 363, 420, 429], ['f', 279, 372, 426, 432], ['h', 288, 288, 408, 444], ['h', 177, 279, 306, 342],
    ['f', 258, 279, 333, 387], ['f', 330, 330, 453, 540], ['f', 402, 438, 558, 558], ['f', 552, 555, 711, 732],
    ['h', 603, 609, 711, 711], ['f', 606, 609, 765, 771], ['f', 714, 768, 873, 951], ['h', 774, 774, 882, 933],
    ['f', 774, 774, 780, 786]
];

const widgetCandles = [
    ['g', 510, 564, 600, 600], ['r', 532, 564, 605, 624], ['r', 573, 603, 720, 742], ['r', 717, 717, 856, 856],
    ['r', 854, 854, 892, 922], ['g', 848, 870, 892, 894], ['r', 870, 870, 976, 1001], ['r', 947, 974, 1006, 1009],
    ['g', 873, 905, 1006, 1012], ['r', 873, 905, 946, 950], ['r', 916, 944, 1023, 1023], ['g', 979, 1014, 1023, 1034],
    ['g', 982, 995, 1018, 1031], ['g', 935, 993, 997, 1018], ['g', 884, 884, 995, 1034], ['r', 802, 884, 889, 919],
    ['g', 777, 804, 889, 894], ['g', 736, 744, 807, 829], ['g', 695, 695, 747, 845], ['g', 592, 649, 698, 709],
    ['r', 603, 649, 704, 709], ['g', 608, 616, 704, 717], ['g', 532, 600, 619, 649], ['r', 589, 600, 638, 679],
    ['r', 635, 635, 734, 785], ['r', 684, 731, 794, 794], ['r', 791, 791, 900, 914], ['g', 824, 829, 900, 900],
    ['r', 826, 829, 941, 941], ['r', 900, 938, 1009, 1066], ['g', 941, 941, 1009, 1055], ['r', 941, 941, 948, 952]
];

const colors = {
    h: { body: 'none', line: '#ffcf01', border: '#ffcf01' },
    f: { body: '#ffcf01', line: '#ffcf01', border: '#ffcf01' },
    g: { body: '#16c784', line: '#26a69a', border: '#16c784' },
    r: { body: '#f6465d', line: '#ef5350', border: '#f6465d' }
};

function draw(parent, tag, attrs) {
    const el = document.createElementNS(SVG_NS, tag);
    for (const key in attrs) {
        el.setAttribute(key, attrs[key]);
    }
    parent.appendChild(el);
}

function drawLine(parent, d, stroke, dash) {
    draw(parent, 'path', { d: d, stroke: stroke, 'stroke-dasharray': dash || 'none' });
}

function drawCandles(parent, candles, x, toY) {
    for (const [type, high, top, bottom, low] of candles) {
        const color = colors[type];
        const [y1, y2, y3, y4] = [high, top, bottom, low].map(toY);
        const height = Math.max(y3 - y2 - 1, 1);
        drawLine(parent, `M${x} ${y1}V${y2}M${x} ${y3}V${y4}`, color.line);
        draw(parent, 'rect', { x: x - 2, y: y2 + 0.5, width: 4, height: height, fill: color.body, stroke: color.border });
        x += 6;
    }
}

function drawLabels(id, count, start, step, format) {
    const box = document.getElementById(id);
    for (let i = 0; i < count; i++) {
        const label = document.createElement('span');
        label.textContent = format(start - i * step);
        box.appendChild(label);
    }
}

const mainPlot = document.getElementById('mainPlot');
for (let i = 0; i < 23; i++) {
    drawLine(mainPlot, `M0 ${Math.round(23 + i * 35.9) + 0.5}H2000`, '#363f4b');
}
for (let x = 89.5; x < 600; x += 90) {
    drawLine(mainPlot, `M${x} 0V2000`, '#363f4b');
}
drawLine(mainPlot, 'M0 550.5H2000', '#0277bd', '1 2');
drawCandles(mainPlot, mainCandles, -0.5, v => Math.round(v / 3) + 325);
drawLine(mainPlot, 'M0 585.5H2000', '#db4022', '1 2');
drawLabels('mainPrices', 23, 1938.6, 0.2, v => v.toFixed(3));

const widgetPlot = document.getElementById('widgetPlot');
for (let y = 52.5; y < 560; y += 68) {
    drawLine(widgetPlot, `M0 ${y}H2000`, '#262a35');
}
drawLine(widgetPlot, 'M86.5 0V2000M176.5 0V2000', '#262a35');
drawCandles(widgetPlot, widgetCandles, 2.5, v => Math.round((v - 50) / 2.727));
drawLine(widgetPlot, 'M0 328.5H2000', '#fff', '1 2');
drawLabels('widgetPrices', 8, 1937.5, 0.5, v => v === 1935.5 ? '' : v.toFixed(4));

const roundGrid = document.getElementById('roundGrid');
for (let i = 0; i < 20; i++) {
    drawLine(roundGrid, `M29 ${Math.round(5 + i * 48.5) + 0.5}H871`, '#0c0c0c');
}
drawLabels('roundPrices', 20, 1935.52, 0.02, v => String(Number(v.toFixed(2))));
```
